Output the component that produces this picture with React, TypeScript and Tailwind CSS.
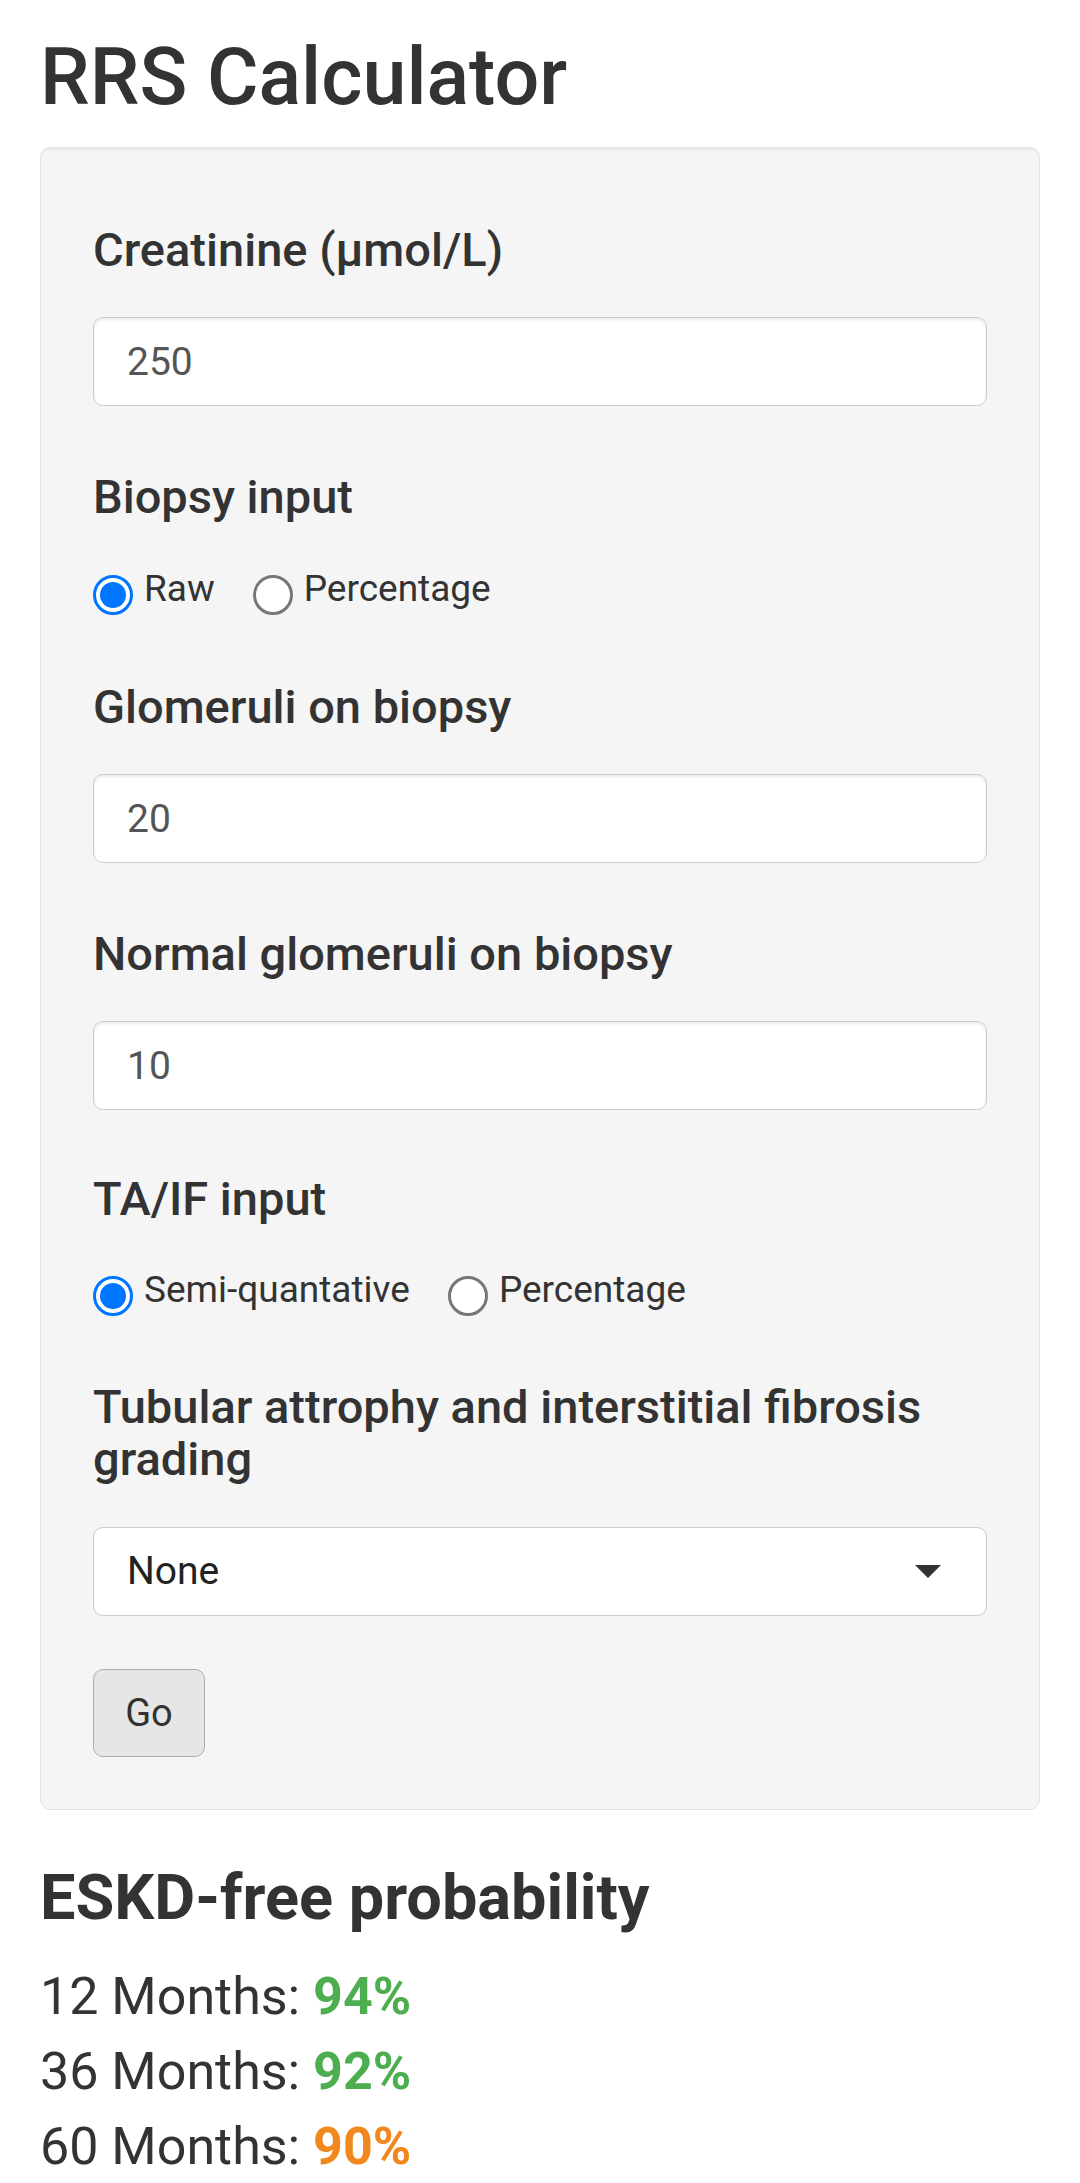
import React from 'react';

const font = "font-['Roboto','Liberation_Sans',sans-serif]";

const Label: React.FC<{ children: React.ReactNode; className?: string }> = ({ children, className = '' }) => (
  <label className={`block text-[47px] leading-[52px] font-medium text-[#333] ${className}`}>{children}</label>
);

const TextInput: React.FC<{ value: string }> = ({ value }) => (
  <input
    type="number"
    defaultValue={value}
    className="mt-[41px] block w-full h-[89px] pl-[33px] pr-[33px] bg-white border border-[#ccc] rounded-[10px] text-[39px] text-[#555] shadow-[inset_0_2px_3px_rgba(0,0,0,0.075)] outline-none"
  />
);

const Radio: React.FC<{ label: string; checked?: boolean }> = ({ label, checked }) => (
  <div className="flex items-start mr-[38px]">
    {checked ? (
      <span className="mt-[6px] w-[40px] h-[40px] rounded-full border-[3px] border-[#0075ff] bg-white flex items-center justify-center shrink-0">
        <span className="w-[26px] h-[26px] rounded-full bg-[#0075ff]" />
      </span>
    ) : (
      <span className="mt-[6px] w-[40px] h-[40px] rounded-full border-[3px] border-[#767676] bg-white shrink-0" />
    )}
    <span className="ml-[11px] text-[37px] leading-[40px] text-[#333]">{label}</span>
  </div>
);

const RadioRow: React.FC<{ options: string[]; className: string }> = ({ options, className }) => (
  <div className={`${className} flex`}>
    {options.map((o, i) => (
      <Radio key={o} label={o} checked={i === 0} />
    ))}
  </div>
);

const Result: React.FC<{ months: number; pct: string; color: string }> = ({ months, pct, color }) => (
  <div className="text-[52px] leading-[75px] text-[#333]">
    {months} Months: <span className={`font-bold ${color}`}>{pct}</span>
  </div>
);

export default function App() {
  return (
    <div className={`${font} bg-white px-[40px] w-[1080px]`}>
      <h1 className="mt-[33px] mb-[26px] text-[79px] leading-[88px] font-medium text-[#333]">RRS Calculator</h1>

      <div className="bg-[#f5f5f5] border border-[#e3e3e3] rounded-[10px] px-[52px] pt-[76px] pb-[52px] shadow-[inset_0_2px_2px_rgba(0,0,0,0.05)]">
        <Label>Creatinine (µmol/L)</Label>
        <TextInput value="250" />

        <Label className="mt-[65px]">Biopsy input</Label>
        <RadioRow className="mt-[46px]" options={['Raw', 'Percentage']} />

        <Label className="mt-[66px]">Glomeruli on biopsy</Label>
        <TextInput value="20" />

        <Label className="mt-[65px]">Normal glomeruli on biopsy</Label>
        <TextInput value="10" />

        <Label className="mt-[63px]">TA/IF input</Label>
        <RadioRow className="mt-[45px]" options={['Semi-quantative', 'Percentage']} />

        <Label className="mt-[65px]">Tubular attrophy and interstitial fibrosis grading</Label>
        <div className="mt-[42px] flex items-center justify-between h-[89px] pl-[33px] pr-[45px] bg-white border border-[#ccc] rounded-[10px]">
          <span className="text-[39px] text-[#222]">None</span>
          <svg width="26" height="13" viewBox="0 0 26 13">
            <path d="M0 0 L26 0 L13 13 Z" fill="#333" />
          </svg>
        </div>

        <button className="mt-[53px] block w-[112px] h-[88px] bg-[#e6e6e6] border border-[#adadad] rounded-[10px] text-[38px] text-[#333]">
          Go
        </button>
      </div>

      <h3 className="mt-[53px] text-[63px] leading-[70px] font-bold text-[#333]">ESKD-free probability</h3>
      <div className="mt-[26px]">
        <Result months={12} pct="94%" color="text-[#4cae4f]" />
        <Result months={36} pct="92%" color="text-[#4cae4f]" />
        <Result months={60} pct="90%" color="text-[#f0881d]" />
      </div>
    </div>
  );
}
